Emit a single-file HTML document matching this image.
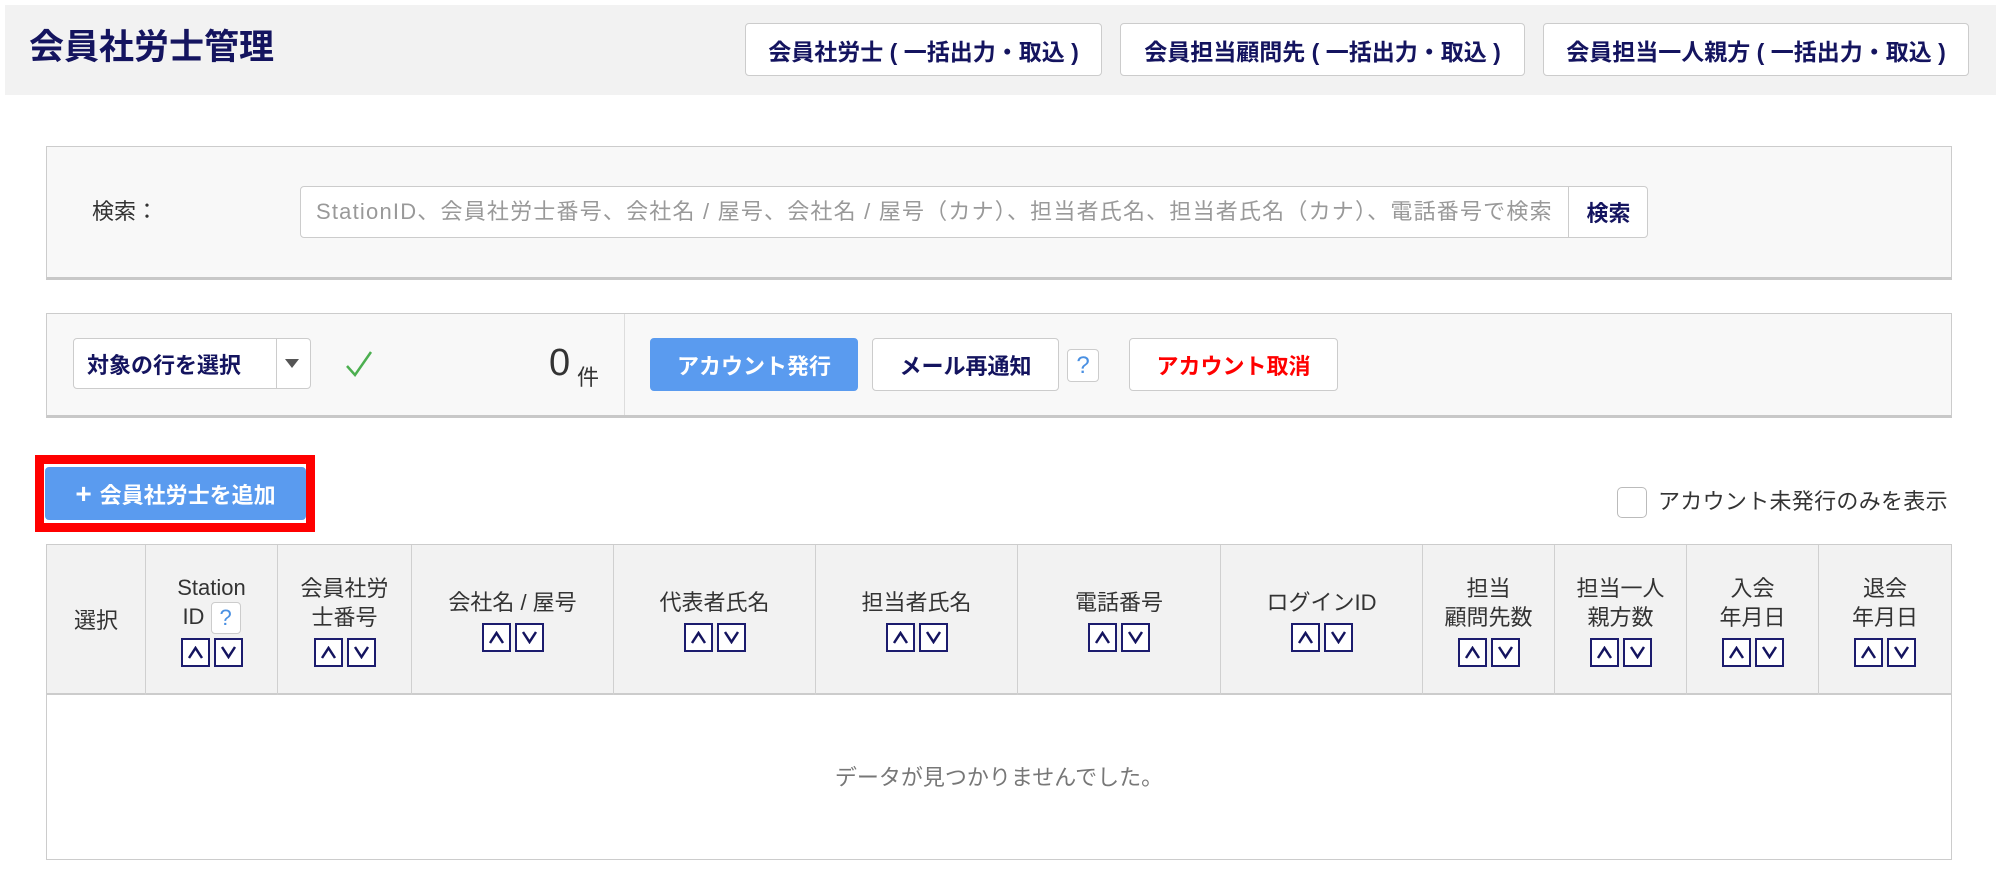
<!DOCTYPE html>
<html><head><meta charset="utf-8"><style>
*{box-sizing:border-box;margin:0;padding:0}
body{width:2000px;height:869px;background:#fff;position:relative;overflow:hidden;font-family:"Liberation Sans","Noto Sans CJK JP",sans-serif;color:#333;font-size:22px}
.a{position:absolute}
.hdr{left:5px;top:5px;width:1991px;height:90px;background:#f2f2f2}
.title{left:29px;top:28px;font-size:35px;font-weight:bold;color:#14145f;line-height:40px}
.tb{top:23px;height:53px;background:#fff;border:1px solid #ccc;border-radius:4px;font-weight:bold;color:#14145f;font-size:23px;display:flex;align-items:center;justify-content:center;white-space:nowrap}
.panel{left:46px;width:1906px;background:#f8f8f8;border:1px solid #ccc;border-bottom:3px solid #c8c8c8}
.btn{background:#fff;border:1px solid #ccc;border-radius:4px;display:flex;align-items:center;justify-content:center;font-weight:bold;font-size:22px;white-space:nowrap}
.sort{display:inline-flex;gap:4px}
.sort span{width:29px;height:29px;border:2px solid #1c1c6e;background:#fff;display:flex;align-items:center;justify-content:center}
.col{position:absolute;top:0;height:150px;border-right:1px solid #d0d0d0;display:flex;flex-direction:column;align-items:center;justify-content:center;text-align:center;line-height:29px;font-size:22px;white-space:nowrap}
</style></head><body>
<div class="a hdr"></div>
<div class="a title">会員社労士管理</div>
<div class="a tb" style="left:745px;width:357px">会員社労士 ( 一括出力・取込 )</div>
<div class="a tb" style="left:1120px;width:405px">会員担当顧問先 ( 一括出力・取込 )</div>
<div class="a tb" style="left:1543px;width:426px">会員担当一人親方 ( 一括出力・取込 )</div>

<div class="a panel" style="top:146px;height:134px"></div>
<div class="a" style="left:92px;top:198px;line-height:28px">検索：</div>
<div class="a" style="left:300px;top:186px;width:1348px;height:52px;background:#fff;border:1px solid #ccc;border-radius:4px"></div>
<div class="a" style="left:316px;top:198px;line-height:28px;color:#999;white-space:nowrap;letter-spacing:1.2px">StationID、会員社労士番号、会社名 / 屋号、会社名 / 屋号（カナ）、担当者氏名、担当者氏名（カナ）、電話番号で検索</div>
<div class="a" style="left:1568px;top:186px;width:80px;height:52px;border-left:1px solid #ccc;display:flex;align-items:center;justify-content:center;font-weight:bold;color:#14145f">検索</div>

<div class="a panel" style="top:313px;height:105px"></div>
<div class="a" style="left:624px;top:314px;width:1px;height:101px;background:#ddd"></div>
<div class="a btn" style="left:73px;top:338px;width:238px;height:51px;justify-content:flex-start;padding-left:13px;color:#14145f">対象の行を選択</div>
<div class="a" style="left:276px;top:339px;width:1px;height:49px;background:#ccc"></div>
<div class="a" style="left:285px;top:359px;width:0;height:0;border-left:7px solid transparent;border-right:7px solid transparent;border-top:9px solid #555"></div>
<svg class="a" style="left:344px;top:349px" width="30" height="30" viewBox="0 0 30 30"><path d="M3 17 L11 26 L27 3" fill="none" stroke="#4caf50" stroke-width="2.5"/></svg>
<div class="a" style="left:549px;top:342px;font-size:38px;line-height:42px">0</div>
<div class="a" style="left:577px;top:360px;font-size:22px">件</div>
<div class="a btn" style="left:650px;top:338px;width:208px;height:53px;background:#5a9bef;border-color:#5a9bef;color:#fff">アカウント発行</div>
<div class="a btn" style="left:872px;top:338px;width:187px;height:53px;color:#14145f">メール再通知</div>
<div class="a btn" style="left:1067px;top:349px;width:32px;height:33px;color:#4a90e2;font-weight:normal;font-size:24px">?</div>
<div class="a btn" style="left:1129px;top:338px;width:209px;height:53px;color:#f00">アカウント取消</div>

<div class="a" style="left:35px;top:455px;width:280px;height:77px;border:9px solid #f00;background:#fff"></div>
<div class="a btn" style="left:45px;top:467px;width:261px;height:53px;background:#5a9bef;border-color:#5a9bef;color:#fff"><span style="font-size:28px;margin-right:8px;font-weight:bold">+</span>会員社労士を追加</div>

<div class="a" style="left:1617px;top:487px;width:30px;height:31px;border:1px solid #bbb;border-radius:5px;background:#fff"></div>
<div class="a" style="left:1658px;top:488px;line-height:28px;white-space:nowrap;letter-spacing:0.3px">アカウント未発行のみを表示</div>

<div class="a" style="left:46px;top:544px;width:1906px;height:316px;border:1px solid #ccc">
 <div class="a" style="left:0;top:0;width:1904px;height:150px;background:#f2f2f2;border-bottom:2px solid #ccc"></div>
 <div class="col" style="left:0;width:99px">選択</div>
 <div class="col" style="left:99px;width:132px"><div>Station</div><div>ID <span style="display:inline-block;width:30px;height:32px;border:1px solid #ccc;border-radius:4px;background:#fff;color:#4a90e2;line-height:30px;vertical-align:middle">?</span></div><div class="sort" style="margin-top:4px"><span><svg width="17" height="13"><path d="M2 12 L8.5 2 L15 12" fill="none" stroke="#14145f" stroke-width="2.5"/></svg></span><span><svg width="17" height="13"><path d="M2 1 L8.5 11 L15 1" fill="none" stroke="#14145f" stroke-width="2.5"/></svg></span></div></div>
 <div class="col" style="left:231px;width:134px"><div>会員社労</div><div>士番号</div><div class="sort" style="margin-top:6px"><span><svg width="17" height="13"><path d="M2 12 L8.5 2 L15 12" fill="none" stroke="#14145f" stroke-width="2.5"/></svg></span><span><svg width="17" height="13"><path d="M2 1 L8.5 11 L15 1" fill="none" stroke="#14145f" stroke-width="2.5"/></svg></span></div></div>
 <div class="col" style="left:365px;width:202px"><div>会社名 / 屋号</div><div class="sort" style="margin-top:6px"><span><svg width="17" height="13"><path d="M2 12 L8.5 2 L15 12" fill="none" stroke="#14145f" stroke-width="2.5"/></svg></span><span><svg width="17" height="13"><path d="M2 1 L8.5 11 L15 1" fill="none" stroke="#14145f" stroke-width="2.5"/></svg></span></div></div>
 <div class="col" style="left:567px;width:202px"><div>代表者氏名</div><div class="sort" style="margin-top:6px"><span><svg width="17" height="13"><path d="M2 12 L8.5 2 L15 12" fill="none" stroke="#14145f" stroke-width="2.5"/></svg></span><span><svg width="17" height="13"><path d="M2 1 L8.5 11 L15 1" fill="none" stroke="#14145f" stroke-width="2.5"/></svg></span></div></div>
 <div class="col" style="left:769px;width:202px"><div>担当者氏名</div><div class="sort" style="margin-top:6px"><span><svg width="17" height="13"><path d="M2 12 L8.5 2 L15 12" fill="none" stroke="#14145f" stroke-width="2.5"/></svg></span><span><svg width="17" height="13"><path d="M2 1 L8.5 11 L15 1" fill="none" stroke="#14145f" stroke-width="2.5"/></svg></span></div></div>
 <div class="col" style="left:971px;width:203px"><div>電話番号</div><div class="sort" style="margin-top:6px"><span><svg width="17" height="13"><path d="M2 12 L8.5 2 L15 12" fill="none" stroke="#14145f" stroke-width="2.5"/></svg></span><span><svg width="17" height="13"><path d="M2 1 L8.5 11 L15 1" fill="none" stroke="#14145f" stroke-width="2.5"/></svg></span></div></div>
 <div class="col" style="left:1174px;width:202px"><div>ログインID</div><div class="sort" style="margin-top:6px"><span><svg width="17" height="13"><path d="M2 12 L8.5 2 L15 12" fill="none" stroke="#14145f" stroke-width="2.5"/></svg></span><span><svg width="17" height="13"><path d="M2 1 L8.5 11 L15 1" fill="none" stroke="#14145f" stroke-width="2.5"/></svg></span></div></div>
 <div class="col" style="left:1376px;width:132px"><div>担当</div><div>顧問先数</div><div class="sort" style="margin-top:6px"><span><svg width="17" height="13"><path d="M2 12 L8.5 2 L15 12" fill="none" stroke="#14145f" stroke-width="2.5"/></svg></span><span><svg width="17" height="13"><path d="M2 1 L8.5 11 L15 1" fill="none" stroke="#14145f" stroke-width="2.5"/></svg></span></div></div>
 <div class="col" style="left:1508px;width:132px"><div>担当一人</div><div>親方数</div><div class="sort" style="margin-top:6px"><span><svg width="17" height="13"><path d="M2 12 L8.5 2 L15 12" fill="none" stroke="#14145f" stroke-width="2.5"/></svg></span><span><svg width="17" height="13"><path d="M2 1 L8.5 11 L15 1" fill="none" stroke="#14145f" stroke-width="2.5"/></svg></span></div></div>
 <div class="col" style="left:1640px;width:132px"><div>入会</div><div>年月日</div><div class="sort" style="margin-top:6px"><span><svg width="17" height="13"><path d="M2 12 L8.5 2 L15 12" fill="none" stroke="#14145f" stroke-width="2.5"/></svg></span><span><svg width="17" height="13"><path d="M2 1 L8.5 11 L15 1" fill="none" stroke="#14145f" stroke-width="2.5"/></svg></span></div></div>
 <div class="col" style="left:1772px;width:132px;border-right:none"><div>退会</div><div>年月日</div><div class="sort" style="margin-top:6px"><span><svg width="17" height="13"><path d="M2 12 L8.5 2 L15 12" fill="none" stroke="#14145f" stroke-width="2.5"/></svg></span><span><svg width="17" height="13"><path d="M2 1 L8.5 11 L15 1" fill="none" stroke="#14145f" stroke-width="2.5"/></svg></span></div></div>
 <div class="a" style="left:0;top:219px;width:1904px;text-align:center;color:#777;line-height:28px">データが見つかりませんでした。</div>
</div>
</body></html>
